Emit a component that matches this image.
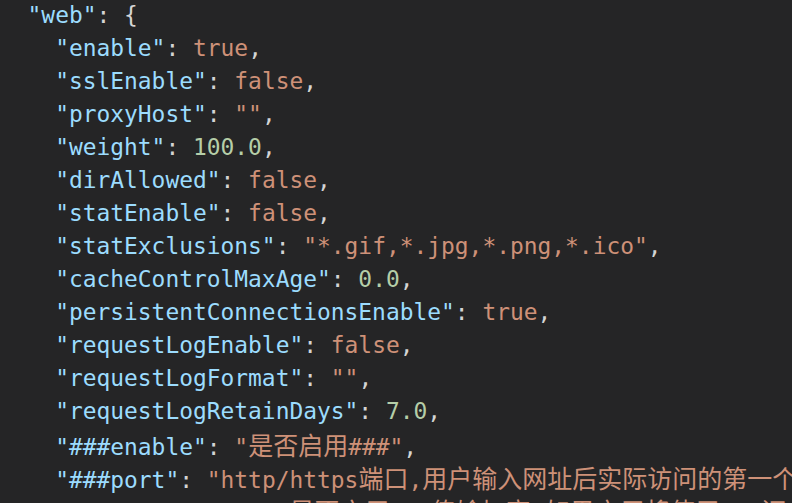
type Tok = { t: string; c: string };

const key = "text-[#9cdcfe]";
const str = "text-[#ce9178]";
const num = "text-[#b5cea8]";
const pun = "text-[#d4d4d4]";

const k = (t: string): Tok => ({ t, c: key });
const s = (t: string): Tok => ({ t, c: str });
const n = (t: string): Tok => ({ t, c: num });
const p = (t: string): Tok => ({ t, c: pun });

const prop = (name: string, value: Tok) => [p("    "), k(`"${name}"`), p(": "), value, p(",")];

const lines: Tok[][] = [
  [p("  "), k('"web"'), p(": {")],
  prop("enable", s("true")),
  prop("sslEnable", s("false")),
  prop("proxyHost", s('""')),
  prop("weight", n("100.0")),
  prop("dirAllowed", s("false")),
  prop("statEnable", s("false")),
  prop("statExclusions", s('"*.gif,*.jpg,*.png,*.ico"')),
  prop("cacheControlMaxAge", n("0.0")),
  prop("persistentConnectionsEnable", s("true")),
  prop("requestLogEnable", s("false")),
  prop("requestLogFormat", s('""')),
  prop("requestLogRetainDays", n("7.0")),
  prop("###enable", s('"是否启用###"')),
  prop("###port", s('"http/https端口,用户输入网址后实际访问的第一个端口"')),
  prop("###sslEnable", s('"是否启用ssl传输加密,如果启用将使用ssl证书"')),
];

// CJK runs get their own size so the wide glyphs line up with the reference
function Text({ t }: { t: string }) {
  const parts = t.split(/([\u4e00-\u9fff]+)/);
  return (
    <>
      {parts.map((part, i) =>
        /[\u4e00-\u9fff]/.test(part) ? (
          <span key={i} className="text-[25px] leading-[33px] [font-family:'Noto_Sans_CJK_SC',sans-serif]">
            {part}
          </span>
        ) : (
          <span key={i}>{part}</span>
        ),
      )}
    </>
  );
}

export default function App() {
  return (
    <div className="w-[792px] h-[503px] overflow-hidden bg-[#252526]">
      <div className="-mt-[1.5px] [font-family:'DejaVu_Sans_Mono','Noto_Sans_CJK_SC',monospace] text-[22.9px] leading-[33px] whitespace-pre">
        {lines.map((line, i) => (
          <div key={i} className="h-[33px]">
            {line.map((tok, j) => (
              <span key={j} className={tok.c}>
                <Text t={tok.t} />
              </span>
            ))}
          </div>
        ))}
      </div>
    </div>
  );
}
